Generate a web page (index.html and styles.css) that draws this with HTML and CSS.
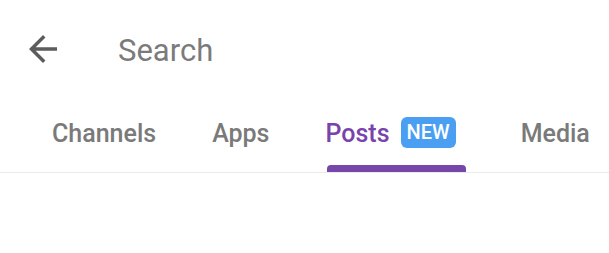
FILE: index.html
```html
<!DOCTYPE html>
<html lang="en">
<head>
<meta charset="utf-8">
<link rel="stylesheet" href="styles.css">
</head>
<body>
<div class="header">
  <svg class="back" viewBox="0 0 24 24" width="42" height="42"><path d="M20 11H7.83l5.59-5.59L12 4l-8 8 8 8 1.41-1.41L7.83 13H20v-2z"/></svg>
  <div class="search">Search</div>
</div>
<div class="tabs">
  <div class="tab"><div class="label">Channels</div></div>
  <div class="tab"><div class="label">Apps</div></div>
  <div class="tab active"><div class="label">Posts<span class="badge">NEW</span></div><div class="indicator"></div></div>
  <div class="tab"><div class="label">Media</div></div>
</div>
</body>
</html>
```
FILE: styles.css
```css
html, body { margin: 0; padding: 0; background: #fff; }
body { font-family: Roboto, "Noto Sans", sans-serif; width: 609px; height: 253px; overflow: hidden; }
.header { display: flex; align-items: center; height: 100px; padding-left: 22px; box-sizing: border-box; }
.back { fill: #5c5c5c; flex: none; margin-top: -2px; }
.search { margin-left: 54px; font-size: 31px; color: #7b7b7b; margin-top: 0; }
.tabs { display: flex; height: 72px; border-bottom: 1px solid #ebebeb; padding-left: 52px; gap: 56px; white-space: nowrap; }
.tab { display: flex; flex-direction: column; flex: none; }
.label { margin-top: 18px; height: 31px; display: flex; align-items: center; font-size: 25px; font-weight: 500; color: #7a7a7a; }
.active .label { color: #7a43ab; padding-right: 9px; }
.badge { margin-left: 11px; background: #4a9ff3; color: #fff; font-size: 20px; font-weight: 500; height: 31px; line-height: 31px; padding: 0 6px; border-radius: 6px; margin-top: -2px; }
.indicator { margin-top: auto; height: 7px; background: #7646a8; border-radius: 4px 4px 0 0; margin-left: 1px; margin-right: -1px; }
```
